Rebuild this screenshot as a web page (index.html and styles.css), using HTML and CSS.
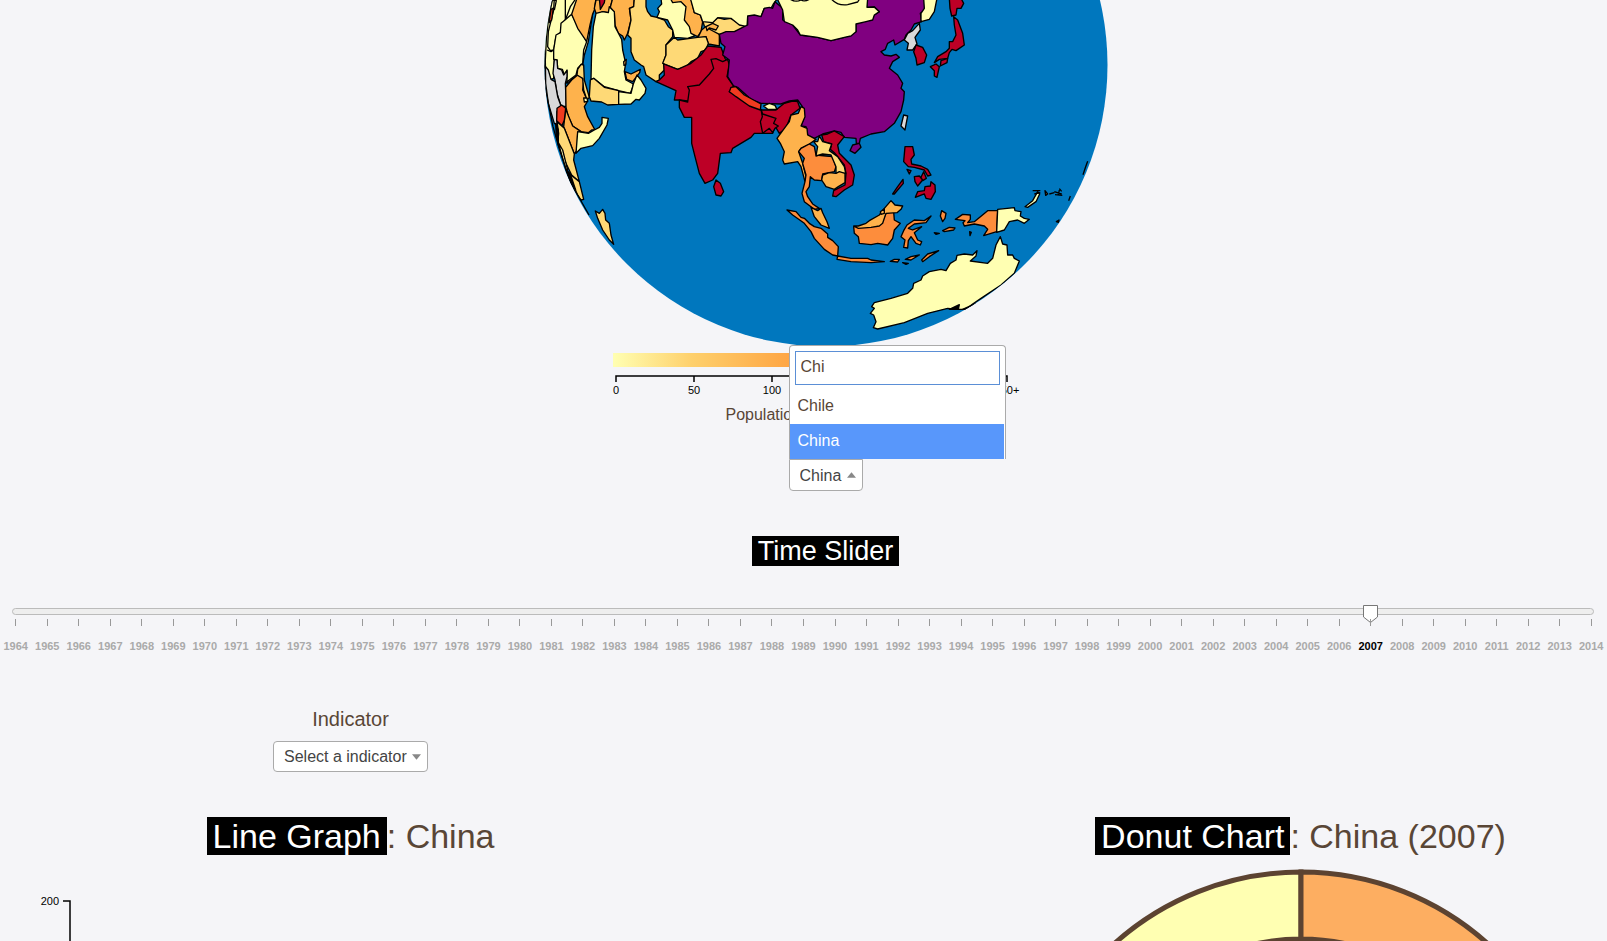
FILE: index.html
```html
<!DOCTYPE html>
<html lang="en">
<head>
<meta charset="utf-8">
<title>World Population</title>
<link rel="stylesheet" href="styles.css">
</head>
<body>
<main class="page">
  <section class="map wide">
    <svg class="globe" viewBox="530 0 590 346" role="img" aria-label="World globe">
      <defs><clipPath id="sphere"><circle cx="825" cy="65" r="281.5"/></clipPath></defs>
      <circle class="ocean" cx="825" cy="65" r="281.5"/>
      <g clip-path="url(#sphere)"><g class="land" transform="translate(530 0) scale(.33333)">
        <g>
          <path class="c1" d="M64-5L195-5 185 40 172 125 160 165 155 195 135 228 108 250 70 180 68 235 60 238 40 200 40 150 40 90Z"/>
          <path class="c1" d="M70-5L103-5 103 60 88 98 75 110 68 150 58 152 50 140 52 95 68 30Z"/>
          <path class="c5" d="M60 28L67 24 62 60 54 68Z"/>
          <path class="line" d="M103 60L118 20 135-5M66 0L76 2 70 30M48 150L60 155 68 150"/>
          <path class="c1" d="M122 43L167 125 158 150 155 190 140 205 135 225 108 245 108 210 100 225 94 208 80 205 78 180 68 178 68 150 75 105 88 98 90 70 102 60Z"/>
          <path class="c3" d="M138-5L195-5 190 30 185 42 177 75 167 125 140 85 122 43Z"/>
          <path class="c0" d="M70 178L78 180 80 205 92 210 98 225 108 212 108 230 103 250 106 320 90 318 78 280 72 240 66 220Z"/>
          <path class="c0" d="M42 198L52 210 60 238 72 245 80 290 90 318 78 335 78 375 70 370 52 310 40 250Z"/>
          <path class="c3" d="M140 225L150 228 158 240 155 270 170 303 160 320 170 350 192 390 182 390 172 398 150 395 125 378 112 350 105 322 104 262 122 240Z"/>
          <path class="c2" d="M150 193L158 195 160 240 175 292 168 300 158 270 155 235 138 225 140 208Z"/>
          <path class="c3" d="M104 328L125 378 150 395 140 398 139 450 130 462 98 380Z"/>
          <path class="c5" d="M78 325L92 315 104 325 100 360 93 377 77 362Z"/>
          <path class="c2" d="M78 365L100 385 130 462 128 480 145 545 122 525 95 470 80 430 83 400Z"/>
          <path class="c1" d="M82 428L95 450 110 510 104 508Z"/>
          <path class="c2" d="M108 513L120 525 145 545 158 598 150 600 130 570Z"/>
          <path class="blk" d="M74 370L82 390 82 430 76 410ZM104 508L118 522 134 570 118 548Z"/>
          <path class="line" d="M64 0L52 60 46 120 43 180 44 250 52 310 66 380 86 450 108 515 140 585 174 645"/>
          <path class="c1" d="M213 352L232 355 228 375 205 415 185 437 150 445 135 460 140 395 172 400 190 390 205 382 213 370Z"/>
          <path class="c1" d="M158 294L168 294 170 304 160 306Z"/>
          <path class="c2" d="M193 633L205 640 215 628 222 640 224 660 235 670 240 705 248 733 235 720 215 690 200 655Z"/>
          <path class="c3" d="M195 0L245-5 238 22 232 38 215 35 205 42 195 40 190 25Z"/>
          <path class="c6" d="M205-5L222-5 220 8 208 28Z"/>
          <path class="c3" d="M245-5L310-5 308 20 295 25 300 60 290 100 280 120 275 108 262 100 252 75 250 38 238 22Z"/>
          <path class="c1" d="M195 40L215 35 232 38 235 20 250 35 252 80 265 105 272 118 275 150 284 190 280 215 285 240 307 252 305 262 298 280 263 272 220 260 188 235 180 238 182 150 187 80Z"/>
          <path class="c2" d="M188 235L220 262 263 272 263 313 230 315 212 306 180 303 175 290 178 240Z"/>
          <path class="c3" d="M278 185L286 178 284 195 279 196ZM282 215L300 222 328 208 326 218 305 245 287 238Z"/>
          <path class="c1" d="M307 252L318 225 330 240 345 265 342 280 325 300 315 298 300 312 263 313 263 275 300 280Z"/>
          <path class="c2" d="M310-5L345-5 345 20 350 35 360 48 378 52 400 60 412 80 425 90 425 110 405 135 405 165 398 185 400 210 385 225 385 240 375 245 345 225 338 200 330 195 310 180 300 155 300 115 290 105 300 60 296 25 308 20Z"/>
          <path class="c1" d="M390-5L470-5 490 50 490 108 470 115 430 112 425 90 410 60 378 52 385 35 380 25 392 12Z"/>
          <path class="c3" d="M418-5L480-5 490 38 508 45 515 65 510 95 500 110 480 100 475 80 460 60 465 20 450 5 425 8Z"/>
          <path class="c3" d="M512 90L530 75 565 100 565 138 532 132 525 110 500 115Z"/>
          <path class="c2" d="M515 62L545 65 560 53 580 58 600 55 625 72 640 78 632 92 610 95 565 103 540 90 520 78Z"/>
          <path class="c3" d="M525 80L545 70 562 78 555 90 535 84 528 92Z"/>
          <path class="c1" d="M478-5L740-5 727 12 720 25 700 25 690 50 650 50 648 80 625 75 600 55 560 53 545 68 515 65 508 45 490 38Z"/>
          <path class="c2" d="M430 112L440 120 478 115 500 112 525 110 532 130 525 150 510 155 500 175 480 185 465 200 440 208 395 190 405 165 405 135Z"/>
          <path class="c6" d="M375 245L385 240 400 225 398 192 440 208 480 190 510 165 530 138 570 142 582 175 590 185 560 240 470 303 445 300 430 300 435 272Z"/>
          <path class="c6" d="M445 300L470 306 475 270 470 260 505 255 535 222 548 205 540 178 555 176 575 185 590 178 595 195 588 230 608 258 595 275 690 330 735 330 760 310 785 303 800 305 807 325 780 345 765 385 745 400 732 378 725 400 670 400 660 412 605 445 600 458 568 460 560 520 545 540 522 550 505 520 492 470 482 430 482 352 460 352 445 322Z"/>
        </g>
        <g transform="translate(510 0)">
          <path class="c6" d="M180 328L185 342 225 355 218 370 232 378 222 385 215 398 205 385 185 400 178 365 184 350Z"/>
          <path class="c6" d="M45 540L58 550 68 575 60 588 45 585 38 560Z"/>
          <path class="c7" d="M55 103L75 95 100 95 125 82 140 75 140 48 160 45 180 50 190 25 205 22 215 25 222 5 245 25 245 60 275 75 298 105 350 112 390 122 430 112 465 95 465 72 520 45 535 35 520 20 498 22 498-5 670-5 672 30 658 40 662 65 640 72 630 90 615 105 610 118 582 135 578 120 560 130 553 148 540 155 550 165 570 168 585 163 595 172 575 185 565 205 590 225 605 250 600 265 610 275 608 300 600 335 580 370 550 395 510 402 478 415 475 430 466 430 465 415 430 412 420 397 400 393 365 402 350 410 340 415 320 405 315 380 300 378 310 350 308 325 290 300 265 303 240 312 180 310 150 298 110 262 98 258 80 230 85 180 65 165 72 140 60 130Z"/>
          <path class="c7" d="M455 435L475 430 480 442 462 460 447 452Z"/>
          <path class="c1" d="M228-5L500-5 498 22 520 22 535 35 520 45 515 60 495 65 465 72 465 95 450 108 430 112 390 122 350 112 298 105 290 90 275 75 250 65 245 30Z"/>
          <path class="line" d="M268-2Q285 8 300 0 310 6 325-2M392-2Q410 18 440 14L470 6 475-2"/>
          <path class="c0" d="M608 345L620 348 612 390 600 378Z"/>
          <path class="c5" d="M90 262L105 260 130 285 180 312 178 330 145 318 105 290 85 275Z"/>
          <path class="c1" d="M188 318L205 310 222 316 228 328 200 328Z"/>
          <path class="c3" d="M300 320L310 325 312 350 300 378 318 385 320 405 345 418 325 432 300 445 293 455 305 490 315 530 312 545 300 500 290 485 250 492 245 480 250 455 238 430 228 415 250 385 265 365 270 345 292 340Z"/>
          <path class="c4" d="M325 432L340 440 345 465 375 468 395 470 405 500 400 515 365 522 362 542 340 540 328 530 325 560 315 575 320 590 335 612 355 625 340 628 310 605 303 580 312 545 315 525 305 490 310 475 293 455 300 445Z"/>
          <path class="c6" d="M362 405L380 402 400 393 430 410 410 435 415 460 450 495 460 525 455 555 430 570 405 590 395 588 398 572 432 555 435 520 430 495 400 458 388 448 392 432 368 425Z"/>
          <path class="c2" d="M338 425L350 425 355 408 365 425 392 432 385 452 410 470 430 500 434 520 405 520 405 500 390 465 365 462 345 468 350 440Z"/>
          <path class="c3" d="M365 525L385 518 405 520 415 515 432 520 432 548 412 560 400 568 375 560 362 540Z"/>
        </g>
        <g transform="translate(1050 0)">
          <path class="c1" d="M128-5L168-5 160 35 145 58 120 65 120 40 130 25Z"/>
          <path class="c0" d="M115 70L118 90 102 112 108 132 95 150 78 150 82 130 70 120 80 100 95 92Z"/>
          <path class="c6" d="M105 135L125 142 137 165 130 188 108 195 105 175 98 155Z"/>
          <path class="c6" d="M218 50L230 60 245 100 250 135 225 152 213 148 205 158 200 175 175 178 160 188 170 170 195 155 205 145 205 125 215 125 225 105 220 75Z"/>
          <path class="c6" d="M205-5L240-5 248 10 240 25 228 25 225 45 212 48 207 25Z"/>
          <path class="c6" d="M148 200L165 192 175 200 168 232 160 228 160 212ZM180 182L200 175 198 188 178 198Z"/>
        </g>
        <g transform="translate(720 360)">
          <path class="c3" d="M120 262L140 272 150 265 155 278 168 305 175 325 150 315 130 290Z"/>
          <path class="c4" d="M48 270L75 275 90 292 100 295 115 310 130 320 150 325 170 342 170 352 185 362 202 380 200 408 185 405 160 388 130 355 120 335 100 310 65 285Z"/>
          <path class="c4" d="M200 408L240 415 270 415 290 415 300 420 340 425 300 428 240 425 198 418Z"/>
          <path class="c4" d="M248 320L300 320 330 310 345 280 368 275 370 300 388 310 370 330 365 355 350 375 320 370 300 374 265 370 262 350 250 340Z"/>
          <path class="c3" d="M248 318L262 318 285 310 295 302 325 285 340 265 360 242 372 255 395 258 390 268 378 278 345 280 335 310 325 318 300 322 262 325Z"/>
          <path class="c3" d="M328 275L340 266 340 280 330 283Z"/>
          <path class="c4" d="M408 315L430 300 460 302 480 288 465 308 430 312 412 325 425 330 452 320 430 338 440 360 452 365 448 375 435 370 420 350 412 362 410 384 398 382 402 360 390 350 398 332Z"/>
          <path class="c4" d="M512 272L525 280 522 295 515 305 508 288ZM515 332L535 322 552 324 548 330 520 335ZM490 338L505 340 495 343ZM358 424L370 418 385 418 380 426ZM403 418L420 410 445 405 420 420ZM395 428L412 430 405 433ZM452 420L470 402 503 392 475 410 455 425Z"/>
          <path class="c6" d="M402 80L425 80 430 105 420 118 422 132 450 138 470 148 480 165 470 168 460 150 430 142 412 140 398 125ZM408 148L420 152 415 162ZM430 170L445 168 455 180 440 198 432 185ZM458 155L466 175 455 182 450 172ZM433 232L440 215 460 212 462 200 478 198 480 185 492 195 493 215 480 238 465 235 460 222ZM365 222L380 200 396 178 397 190 370 222Z"/>
        </g>
        <g transform="translate(930 540)">
          <path class="c1" d="M100 368L150 355 200 340 215 325 218 310 240 300 245 288 265 275 300 268 315 272 328 250 345 240 348 226 370 222 395 225 408 212 405 228 388 243 440 250 455 235 465 195 478 170 485 192 498 195 500 225 515 225 520 235 535 243 520 280 480 315 420 355 395 372 375 388 350 388 320 385 260 400 190 428 110 447 97 443 105 425 98 405 88 400 100 385 92 380Z"/>
          <path class="blk" d="M325 388L355 374 352 388ZM365 388L405 370 385 388Z"/>
          <path class="c4" d="M343 118L365 103 388 105 388 118 380 128 400 125 440 92 470 92 467 155 428 167 440 148 430 138 400 132 370 138 366 128 372 122Z"/>
          <path class="c1" d="M470 88L520 83 522 92 540 95 538 108 550 115 565 118 550 130 530 120 505 125 490 150 467 157Z"/>
          <path class="c1" d="M552 80L575 62 590 35 596 42 585 65 560 82ZM612 32L620 42 614 46ZM646 125L654 120 652 127Z"/>
          <path class="line" d="M575 32L598 32M580 42L598 38M625 42L640 38M640 35L662 42M642 44L664 46M655 26L662 34M683 62L688 48M655 30L652 46"/>
          <path class="c4" d="M386 155L391 157 387 167Z"/>
        </g>
        <path class="line" d="M1670 484L1664 500 1656 524"/>
      </g></g>
    </svg>
    <svg class="legend" viewBox="0 0 430 56" role="img" aria-label="Population legend">
      <defs><linearGradient id="ramp">
        <stop offset="0" stop-color="#ffffb2"/><stop offset=".2" stop-color="#fed06c"/><stop offset=".42" stop-color="#feaa48"/><stop offset=".6" stop-color="#fd8d3c"/><stop offset=".8" stop-color="#f03b20"/><stop offset="1" stop-color="#bd0026"/>
      </linearGradient></defs>
      <rect x="2" y="7" width="393" height="14" fill="url(#ramp)"/>
      <path class="axis" d="M5 36V30H396V36M83 30V36M161 30V36M239 30V36M318 30V36"/>
      <g class="tick-text" text-anchor="middle">
        <text x="5" y="48">0</text><text x="83" y="48">50</text><text x="161" y="48">100</text><text x="239" y="48">150</text><text x="318" y="48">200</text><text x="396" y="48">250+</text>
      </g>
    </svg>
    <p class="caption">Population (in millions)</p>
    <div class="picker">
      <select class="select open" aria-label="Country"><option>China</option></select>
      <svg class="arrow" viewBox="0 0 10 6"><path d="M0 6L5 0 10 6Z"/></svg>
      <div class="dropdown">
        <div class="search"><input type="text" value="Chi" aria-label="Search country"></div>
        <ul role="listbox"><li role="option">Chile</li><li role="option" class="active" aria-selected="true">China</li></ul>
      </div>
    </div>
    <h2 class="slider-title"><mark>Time Slider</mark></h2>
  </section>

  <section class="slider">
    <div class="rail"></div>
    <input type="range" min="1964" max="2014" value="2007" aria-label="Year">
    <ol class="years"><li>1964</li><li>1965</li><li>1966</li><li>1967</li><li>1968</li><li>1969</li><li>1970</li><li>1971</li><li>1972</li><li>1973</li><li>1974</li><li>1975</li><li>1976</li><li>1977</li><li>1978</li><li>1979</li><li>1980</li><li>1981</li><li>1982</li><li>1983</li><li>1984</li><li>1985</li><li>1986</li><li>1987</li><li>1988</li><li>1989</li><li>1990</li><li>1991</li><li>1992</li><li>1993</li><li>1994</li><li>1995</li><li>1996</li><li>1997</li><li>1998</li><li>1999</li><li>2000</li><li>2001</li><li>2002</li><li>2003</li><li>2004</li><li>2005</li><li>2006</li><li class="now">2007</li><li>2008</li><li>2009</li><li>2010</li><li>2011</li><li>2012</li><li>2013</li><li>2014</li></ol>
  </section>

  <section class="charts wide">
    <div class="chart">
      <div class="indicator">
        <label for="indicator">Indicator</label>
        <div class="picker">
          <select class="select" id="indicator"><option>Select a indicator</option></select>
          <svg class="arrow" viewBox="0 0 10 6"><path d="M0 0L5 6 10 0Z"/></svg>
        </div>
      </div>
      <h1><mark>Line Graph</mark>: China</h1>
      <svg class="plot" viewBox="0 0 701 75" role="img" aria-label="Line graph">
        <path class="axis" d="M63 35H70V80"/>
        <text class="tick-text" x="59" y="39" text-anchor="end">200</text>
      </svg>
    </div>
    <div class="chart donut">
      <h1><mark>Donut Chart</mark>: China (2007)</h1>
      <svg class="plot" viewBox="0 0 701 75" role="img" aria-label="Donut chart">
        <g class="ring">
          <path class="s1" d="M351 6A279 279 0 0 0 72 285H139A212 212 0 0 1 351 73Z"/>
          <path class="s2" d="M351 6A279 279 0 0 1 630 285H563A212 212 0 0 0 351 73Z"/>
        </g>
      </svg>
    </div>
  </section>
</main>
</body>
</html>
```
FILE: styles.css
```css
* { box-sizing: border-box; }
body {
  margin: 0;
  background: #f5f5f8;
  color: #594636;
  font: 16px/24px "Liberation Sans", Arial, sans-serif;
}
h1, h2, p, ul, ol { margin: 0; padding: 0; font-weight: 400; list-style: none; }
mark { background: #000; color: #fff; padding: 0 6px; }

.page { height: 100vh; overflow: hidden; }
.wide { margin-right: -44px; }

.map { display: flex; flex-direction: column; align-items: center; }
.globe { display: block; width: 590px; }
.ocean { fill: #0077be; }
.land path { stroke: #000; stroke-width: 4; stroke-linejoin: round; }
.land .line { fill: none; }
.c0 { fill: #d9d9d9; }
.c1 { fill: #ffffb2; }
.c2 { fill: #fed976; }
.c3 { fill: #feb24c; }
.c4 { fill: #fd8d3c; }
.c5 { fill: #f03b20; }
.c6 { fill: #bd0026; }
.c7 { fill: #800080; }
.blk { fill: #000; }

.legend { display: block; width: 430px; }
.axis { fill: none; stroke: #000; stroke-width: 1.5; }
.tick-text { font-size: 11px; fill: #000; }
.caption { width: 200px; line-height: 26px; white-space: nowrap; }

.picker { position: relative; }
.map .picker { margin-top: 31px; }
.select {
  appearance: none;
  display: block;
  height: 31px;
  padding: 0 20px 0 10px;
  border: 1px solid #aaa;
  border-radius: 4px;
  background: #fff;
  color: #444;
  font: inherit;
}
.select.open { height: 32px; padding-top: 2px; border-radius: 0 0 4px 4px; }
.arrow { position: absolute; right: 7px; top: 13px; width: 9px; height: 6px; fill: #888; }
.dropdown {
  position: absolute;
  left: 0;
  bottom: 100%;
  width: 217px;
  border: 1px solid #aaa;
  border-bottom: 0;
  border-radius: 4px 4px 0 0;
  background: #fff;
}
.dropdown .search { padding: 5px 5px 4px; }
.dropdown input {
  display: block;
  width: 100%;
  height: 34px;
  padding: 0 5px 2px;
  border: 1px solid #5b8fd6;
  outline: 0;
  color: inherit;
  font: inherit;
}
.dropdown li { height: 35px; padding: 0 8px; line-height: 34px; }
.dropdown .active { margin-right: 1px; background: #5897fb; color: #fff; }

.slider-title { margin-top: 41px; font-size: 27px; line-height: 38px; }

.slider { display: grid; margin-top: 35px; }
.slider .rail, .slider input { grid-area: 1 / 1; }
.rail {
  align-self: start;
  height: 7px;
  margin: 3px 13px 0 12px;
  border: 1px solid #bbb;
  border-radius: 4px;
  background: #eee;
}
.slider input { appearance: none; height: 18px; margin: 0 8px; background: none; }
.slider input::-webkit-slider-thumb {
  appearance: none;
  width: 15px;
  height: 18px;
  background: url("data:image/svg+xml,%3Csvg xmlns='http://www.w3.org/2000/svg' viewBox='0 0 15 18'%3E%3Cpath d='M.5.5h14v11.500l-7 5.500-7-5.500z' fill='%23fff' stroke='%23777'/%3E%3C/svg%3E");
}
.years { display: grid; grid-template-columns: repeat(51, 1fr); margin-top: -4px; }
.years li {
  display: flex;
  flex-direction: column;
  align-items: center;
  gap: 14px;
  color: #aaa;
  font-size: 11px;
  font-weight: 700;
  line-height: 12px;
}
.years li::before { content: ""; width: 1px; height: 7px; background: #999; }
.years .now { color: #000; }

.charts {
  display: grid;
  grid-template-columns: 1fr 1fr;
  column-gap: 249px;
  align-items: end;
  margin-top: 54px;
}
.chart { display: flex; flex-direction: column; align-items: center; }
.indicator { display: flex; flex-direction: column; align-items: center; gap: 9px; margin-bottom: 44px; }
.indicator label { font-size: 20px; line-height: 26px; }
h1 { font-size: 34px; line-height: 40px; white-space: nowrap; }
.plot { display: block; width: 100%; margin-top: 10px; }
.ring path { stroke: #5c4331; stroke-width: 5; }
.s1 { fill: #ffffb2; }
.s2 { fill: #fdae61; }
```
